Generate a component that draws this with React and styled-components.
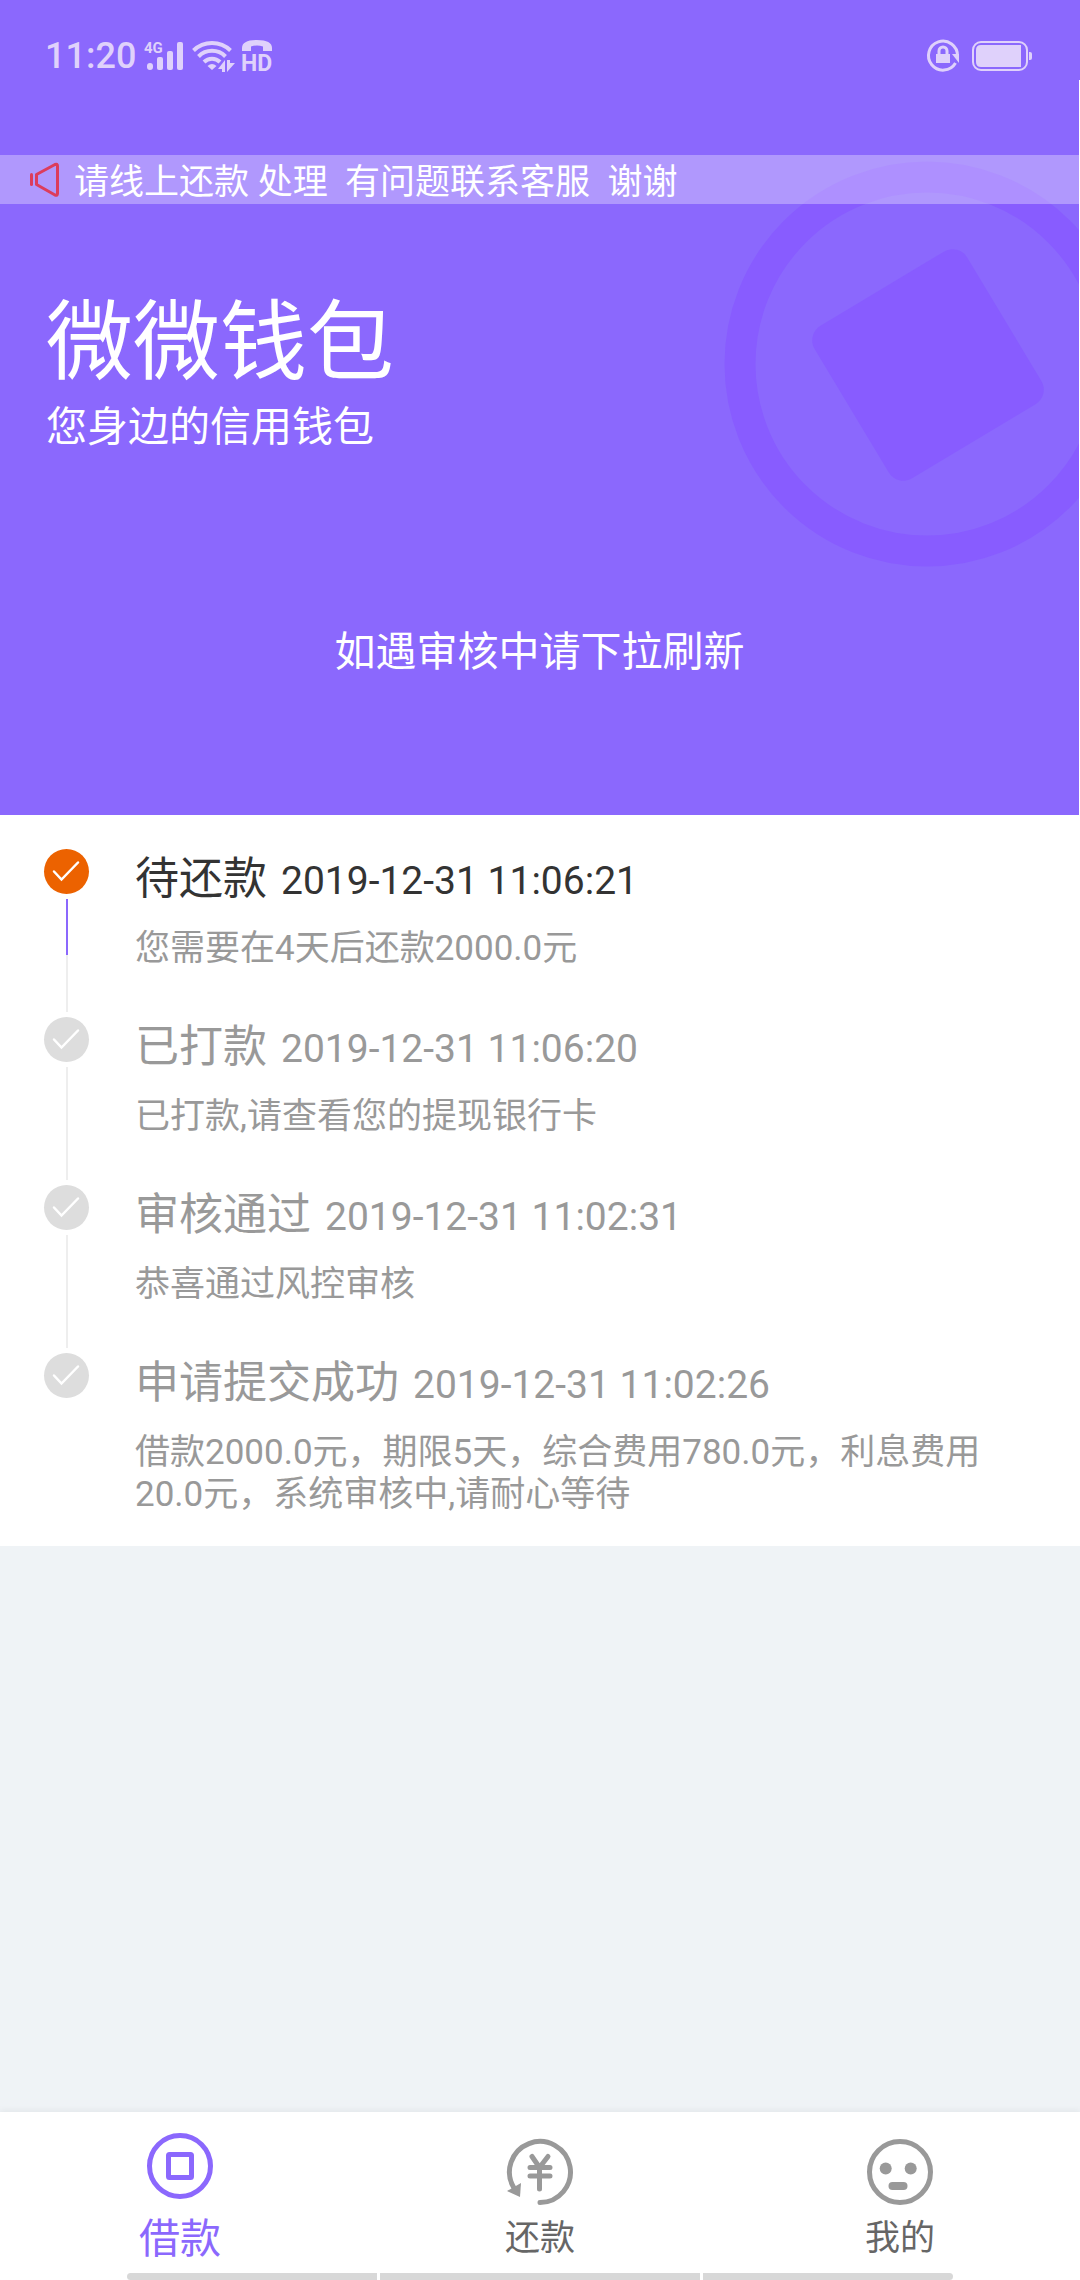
import styled, { createGlobalStyle } from "styled-components";

const colors = {
  primary: "#8b68fd",
  primaryDark: "#885cff",
  status: "#dfd1fb",
  danger: "#dc3c5c",
  orange: "#ec6200",
  dark: "#333333",
  grey: "#999999",
  tab: "#666666",
  circle: "#dddddd",
  line: "#eeeeee",
  page: "#eff3f6",
};

const steps = [
  {
    title: "待还款",
    date: "2019-12-31 11:06:21",
    text: "您需要在4天后还款2000.0元",
    active: true,
  },
  {
    title: "已打款",
    date: "2019-12-31 11:06:20",
    text: "已打款,请查看您的提现银行卡",
  },
  {
    title: "审核通过",
    date: "2019-12-31 11:02:31",
    text: "恭喜通过风控审核",
  },
  {
    title: "申请提交成功",
    date: "2019-12-31 11:02:26",
    text: "借款2000.0元，期限5天，综合费用780.0元，利息费用20.0元，系统审核中,请耐心等待",
  },
];

const SignalIcon = () => (
  <svg width="40" height="32" viewBox="0 0 40 32" fill="currentColor">
    <text x="0" y="13" fontSize="15" fontWeight="700">
      4G
    </text>
    <rect x="3" y="23" width="6" height="7" rx="3" />
    <rect x="13" y="17" width="6" height="13" rx="2" />
    <rect x="23" y="11" width="6" height="19" rx="2" />
    <rect x="33" y="2" width="6" height="28" rx="2" />
  </svg>
);

const WifiIcon = () => (
  <svg width="42" height="32" viewBox="0 0 42 32" fill="none">
    <g stroke="currentColor" strokeWidth="4">
      <path d="M1.500 10.500a26.500 26.500 0 0 1 37 0" />
      <path d="M6.500 16.500a19 19 0 0 1 27 0" />
      <path d="M12 22a11.500 11.500 0 0 1 16 0" />
    </g>
    <g fill="currentColor">
      <path d="M15.500 26q4.500-4 9 0L20 30z" />
      <path d="M26 29l7-9v12h-3v-3z" />
      <path d="M35 32V20h3v3h5z" />
    </g>
  </svg>
);

const HdIcon = () => (
  <svg width="32" height="32" viewBox="0 0 32 32" fill="currentColor">
    <path d="M0 11V8Q0 0 15 0t15 8v3H21V6.500Q15 4.500 9 6.500V11z" />
    <text x="-1" y="31" fontSize="23" fontWeight="700">
      HD
    </text>
  </svg>
);

const LockIcon = () => (
  <svg width="33" height="32" viewBox="0 0 33 32" fill="none">
    <path
      d="M28.500 23A14.500 14.500 0 1 1 30.500 16"
      stroke="currentColor"
      strokeWidth="3"
    />
    <path d="M25 14h7v9z" fill="currentColor" />
    <rect x="9" y="14" width="14" height="9" fill="currentColor" />
    <path
      d="M12 15v-4a4 4 0 0 1 8 0v4"
      stroke="currentColor"
      strokeWidth="3"
    />
  </svg>
);

const BatteryIcon = () => (
  <svg width="60" height="32" viewBox="0 0 60 32" fill="currentColor">
    <rect
      x="1"
      y="2"
      width="54"
      height="28"
      rx="8"
      fill="none"
      stroke="currentColor"
      strokeWidth="2"
    />
    <path d="M9 5h40v22H9q-5 0-5-5V10q0-5 5-5z" />
    <path d="M57 12h1q2 0 2 2v4q0 2-2 2h-1z" />
  </svg>
);

const SpeakerIcon = () => (
  <svg
    width="30"
    height="36"
    viewBox="0 0 30 36"
    fill="none"
    stroke={colors.danger}
    strokeWidth="3"
    strokeLinejoin="round"
    strokeLinecap="round"
  >
    <path d="M1.500 12.500v10" />
    <path d="M6.500 12.500v10L25 33q2.500 1 2.500-1.500V4q0-2.500-2.500-1.500z" />
  </svg>
);

const CheckIcon = () => (
  <svg width="45" height="45" viewBox="0 0 45 45" fill="none">
    <path
      d="M10 22.500l7.500 8L34 13.500"
      stroke="#fff"
      strokeWidth="2.500"
      strokeLinecap="round"
    />
  </svg>
);

const LoanIcon = () => (
  <svg width="66" height="66" viewBox="0 0 66 66" fill="none" stroke={colors.primary}>
    <circle cx="33" cy="33" r="30.500" strokeWidth="5" />
    <rect x="21.500" y="21.500" width="23" height="23" rx="1" strokeWidth="5" />
  </svg>
);

const RepayIcon = () => (
  <svg
    width="66"
    height="66"
    viewBox="0 0 66 66"
    fill="none"
    stroke={colors.grey}
    strokeWidth="5"
    strokeLinecap="round"
  >
    <path d="M33 63.500A30.500 30.500 0 1 0 7 49" />
    <path d="M0 52l14-8-1 14z" fill={colors.grey} stroke="none" />
    <path d="M25 17.500l7.500 11 8.500-11M23 28.500h20M23 37h20M32.500 28.500V50" />
  </svg>
);

const MineIcon = () => (
  <svg width="66" height="66" viewBox="0 0 66 66" fill={colors.grey}>
    <circle cx="33" cy="33" r="30.500" fill="none" stroke={colors.grey} strokeWidth="5" />
    <circle cx="18.700" cy="29.500" r="6" />
    <circle cx="43.700" cy="29.500" r="6" />
    <rect x="21.500" y="43" width="19" height="8" rx="4" />
  </svg>
);

const tabs = [
  { label: "借款", href: "#loan", icon: <LoanIcon />, active: true },
  { label: "还款", href: "#repay", icon: <RepayIcon /> },
  { label: "我的", href: "#mine", icon: <MineIcon /> },
];

const App = () => {
  return (
    <Page>
      <GlobalStyle />
      <StatusBar>
        <StatusGroup>
          <Time>11:20</Time>
          <SignalIcon />
          <WifiIcon />
          <HdIcon />
        </StatusGroup>
        <StatusGroup $gap="12px">
          <LockIcon />
          <BatteryIcon />
        </StatusGroup>
      </StatusBar>

      <Hero>
        <Coin viewBox="0 0 406 406" fill={colors.primaryDark}>
          <circle
            cx="203"
            cy="203"
            r="187"
            fill="none"
            stroke={colors.primaryDark}
            strokeWidth="31"
          />
          <rect
            x="115"
            y="115"
            width="178"
            height="178"
            rx="17"
            transform="rotate(-31 204 204)"
          />
        </Coin>
        <Notice>
          <SpeakerIcon />
          <p>{"请线上还款 处理  有问题联系客服  谢谢"}</p>
        </Notice>
        <Brand>
          <h1>微微钱包</h1>
          <p>您身边的信用钱包</p>
        </Brand>
        <Tip>如遇审核中请下拉刷新</Tip>
      </Hero>

      <Steps>
        {steps.map((step) => (
          <Step key={step.date}>
            <Rail>
              <Dot $active={step.active}>
                <CheckIcon />
              </Dot>
              <Line $active={step.active} />
            </Rail>
            <StepBody $active={step.active}>
              <h2>
                {step.title}
                <time>{step.date}</time>
              </h2>
              <p>{step.text}</p>
            </StepBody>
          </Step>
        ))}
      </Steps>

      <TabBar>
        {tabs.map((tab) => (
          <Tab key={tab.href} href={tab.href} $active={tab.active}>
            {tab.icon}
            <span>{tab.label}</span>
          </Tab>
        ))}
        <Gestures>
          <Pill $grow={25} />
          <Pill $grow={32} />
          <Pill $grow={25} />
        </Gestures>
      </TabBar>
    </Page>
  );
};

export default App;

const GlobalStyle = createGlobalStyle`
  * {
    box-sizing: border-box;
    margin: 0;
    padding: 0;
  }
  body {
    background: ${colors.page};
    font-family: Roboto, "Noto Sans CJK SC", sans-serif;
  }
  svg {
    display: block;
    flex-shrink: 0;
    overflow: visible;
  }
`;

const Page = styled.div`
  min-height: 100vh;
  display: flex;
  flex-direction: column;
`;

const StatusBar = styled.header`
  height: 80px;
  padding: 32px 48px 0 45px;
  display: flex;
  justify-content: space-between;
  align-items: center;
  background: ${colors.primary};
  color: ${colors.status};
`;

const StatusGroup = styled.div`
  display: flex;
  align-items: center;
  gap: ${({ $gap }) => $gap || "8px"};
`;

const Time = styled.span`
  font-size: 36px;
  line-height: 48px;
  font-weight: 500;
`;

const Hero = styled.section`
  position: relative;
  overflow: hidden;
  padding: 75px 0 139px;
  background: ${colors.primary};
  border-right: 1px solid #fff;
  color: #fff;
`;

const Coin = styled.svg`
  position: absolute;
  top: 81px;
  right: -51px;
  width: 406px;
`;

const Notice = styled.div`
  position: relative;
  height: 49px;
  padding: 0 30px;
  display: flex;
  align-items: center;
  gap: 14px;
  background: rgba(255, 255, 255, 0.32);

  p {
    padding-top: 7px;
    font-size: 35px;
    line-height: 42px;
    white-space: pre;
  }
`;

const Brand = styled.div`
  position: relative;
  padding: 87px 46px 0;

  h1 {
    font-size: 87px;
    line-height: 104px;
    font-weight: 400;
  }
  p {
    margin-top: 8px;
    font-size: 41px;
    line-height: 48px;
  }
`;

const Tip = styled.p`
  margin-top: 177px;
  font-size: 41px;
  line-height: 48px;
  text-align: center;
`;

const Steps = styled.ol`
  padding: 34px 44px 0;
  list-style: none;
  background: #fff;
`;

const Rail = styled.div`
  width: 45px;
  padding-bottom: 5px;
  display: flex;
  flex-direction: column;
  align-items: center;
  gap: 5px;
`;

const Dot = styled.span`
  border-radius: 50%;
  background: ${({ $active }) => ($active ? colors.orange : colors.circle)};
`;

const Line = styled.span`
  flex: 1;
  width: 2px;
  background: ${({ $active }) =>
    $active
      ? `linear-gradient(${colors.primary} 50%, ${colors.line} 50%)`
      : colors.line};
`;

const StepBody = styled.div`
  flex: 1;
  padding-bottom: 47px;

  h2 {
    display: flex;
    align-items: baseline;
    gap: 14px;
    height: 60px;
    color: ${({ $active }) => ($active ? colors.dark : colors.grey)};
    font-size: 44px;
    line-height: 60px;
    font-weight: 400;
  }
  time {
    font-size: 39px;
    line-height: 48px;
  }
  p {
    margin-top: 19px;
    color: ${colors.grey};
    font-size: 35px;
    line-height: 42px;
  }
`;

const Step = styled.li`
  display: flex;
  gap: 46px;

  &:last-child {
    ${Line} {
      display: none;
    }
    ${StepBody} {
      padding-bottom: 30px;
    }
  }
`;

const TabBar = styled.nav`
  position: relative;
  margin-top: auto;
  height: 168px;
  display: flex;
  background: #fff;
  box-shadow: 0 -2px 6px rgba(0, 0, 0, 0.05);
`;

const Tab = styled.a`
  flex: 1;
  padding-bottom: 17px;
  display: flex;
  flex-direction: column;
  justify-content: flex-end;
  align-items: center;
  gap: ${({ $active }) => ($active ? "16px" : "10px")};
  color: ${({ $active }) => ($active ? colors.primary : colors.tab)};
  font-size: ${({ $active }) => ($active ? "41px" : "35px")};
  line-height: 48px;
  text-decoration: none;
`;

/* system gesture hints, drawn over the tab bar */
const Gestures = styled.div`
  position: absolute;
  bottom: 0;
  left: 127px;
  right: 127px;
  height: 7px;
  display: flex;
  gap: 3px;
  border-radius: 4px;
  overflow: hidden;
`;

const Pill = styled.span`
  flex: ${({ $grow }) => $grow};
  background: #d8d8d8;
`;
